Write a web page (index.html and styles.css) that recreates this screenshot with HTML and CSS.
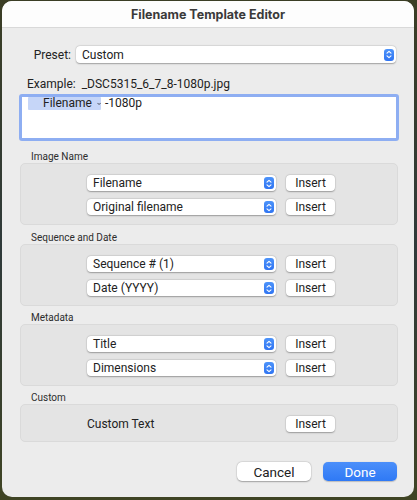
FILE: index.html
```html
<!DOCTYPE html>
<html>
<head>
<meta charset="utf-8">
<link rel="stylesheet" href="styles.css">
</head>
<body>
<div class="window">
  <div class="titlebar">Filename Template Editor</div>
  <div class="content">
    <div class="preset-row">
      <span class="preset-label">Preset:</span>
      <div class="select preset-select">
        <span>Custom</span>
        <span class="stepper"><svg width="6" height="9" viewBox="0 0 6 9"><path d="M1 3.2 L3 1.3 L5 3.2 M1 5.8 L3 7.7 L5 5.8" fill="none" stroke="#fff" stroke-width="1.1" stroke-linecap="round" stroke-linejoin="round"/></svg></span>
      </div>
    </div>
    <div class="example">Example:&nbsp; _DSC5315_6_7_8-1080p.jpg</div>
    <div class="editor">
      <span class="token">Filename <svg class="chev" width="8" height="6" viewBox="0 0 8 6"><path d="M1.5 1.5 L4 4 L6.5 1.5" fill="none" stroke="#1e1e1e" stroke-width="1.4" stroke-linecap="round" stroke-linejoin="round"/></svg></span><span class="suffix">-1080p</span>
    </div>

    <div class="group-label first">Image Name</div>
    <div class="group">
      <div class="row">
        <div class="select"><span>Filename</span><span class="stepper"><svg width="6" height="9" viewBox="0 0 6 9"><path d="M1 3.2 L3 1.3 L5 3.2 M1 5.8 L3 7.7 L5 5.8" fill="none" stroke="#fff" stroke-width="1.1" stroke-linecap="round" stroke-linejoin="round"/></svg></span></div>
        <button class="btn">Insert</button>
      </div>
      <div class="row">
        <div class="select"><span>Original filename</span><span class="stepper"><svg width="6" height="9" viewBox="0 0 6 9"><path d="M1 3.2 L3 1.3 L5 3.2 M1 5.8 L3 7.7 L5 5.8" fill="none" stroke="#fff" stroke-width="1.1" stroke-linecap="round" stroke-linejoin="round"/></svg></span></div>
        <button class="btn">Insert</button>
      </div>
    </div>

    <div class="group-label second">Sequence and Date</div>
    <div class="group">
      <div class="row">
        <div class="select"><span>Sequence # (1)</span><span class="stepper"><svg width="6" height="9" viewBox="0 0 6 9"><path d="M1 3.2 L3 1.3 L5 3.2 M1 5.8 L3 7.7 L5 5.8" fill="none" stroke="#fff" stroke-width="1.1" stroke-linecap="round" stroke-linejoin="round"/></svg></span></div>
        <button class="btn">Insert</button>
      </div>
      <div class="row">
        <div class="select"><span>Date (YYYY)</span><span class="stepper"><svg width="6" height="9" viewBox="0 0 6 9"><path d="M1 3.2 L3 1.3 L5 3.2 M1 5.8 L3 7.7 L5 5.8" fill="none" stroke="#fff" stroke-width="1.1" stroke-linecap="round" stroke-linejoin="round"/></svg></span></div>
        <button class="btn">Insert</button>
      </div>
    </div>

    <div class="group-label">Metadata</div>
    <div class="group">
      <div class="row">
        <div class="select"><span>Title</span><span class="stepper"><svg width="6" height="9" viewBox="0 0 6 9"><path d="M1 3.2 L3 1.3 L5 3.2 M1 5.8 L3 7.7 L5 5.8" fill="none" stroke="#fff" stroke-width="1.1" stroke-linecap="round" stroke-linejoin="round"/></svg></span></div>
        <button class="btn">Insert</button>
      </div>
      <div class="row">
        <div class="select"><span>Dimensions</span><span class="stepper"><svg width="6" height="9" viewBox="0 0 6 9"><path d="M1 3.2 L3 1.3 L5 3.2 M1 5.8 L3 7.7 L5 5.8" fill="none" stroke="#fff" stroke-width="1.1" stroke-linecap="round" stroke-linejoin="round"/></svg></span></div>
        <button class="btn">Insert</button>
      </div>
    </div>

    <div class="group-label">Custom</div>
    <div class="group group-custom">
      <div class="row">
        <div class="custom-text">Custom Text</div>
        <button class="btn">Insert</button>
      </div>
    </div>

    <div class="footer">
      <button class="fbtn cancel">Cancel</button>
      <button class="fbtn done">Done</button>
    </div>
  </div>
</div>
</body>
</html>
```

FILE: styles.css
```css
* { box-sizing: border-box; }
html, body { margin: 0; padding: 0; }
body {
  width: 417px;
  height: 500px;
  overflow: hidden;
  background: linear-gradient(180deg, #3b3e25 0%, #2f3a3a 50%, #3f4424 100%);
  font-family: Roboto, "Noto Sans", sans-serif;
  color: #222;
}
.window {
  margin-left: 2px;
  margin-top: 1px;
  width: 412px;
  height: 496px;
  border-radius: 10px;
  background: #ececec;
  overflow: hidden;
  display: flex;
  flex-direction: column;
}
.titlebar {
  height: 27px;
  background: #fdfdfd;
  border-bottom: 1px solid #d9d9d9;
  text-align: center;
  font-family: Inter, "Noto Sans", sans-serif;
  font-weight: 700;
  font-size: 12.5px;
  line-height: 27px;
  color: #3a3a3a;
  flex: none;
}
.content {
  padding: 18px 15px 0 17px;
  display: flex;
  flex-direction: column;
}
.preset-row {
  display: flex;
  align-items: center;
  height: 17px;
}
.preset-label {
  width: 57px;
  text-align: right;
  padding-right: 5px;
  font-size: 12px;
}
.select {
  height: 16px;
  background: #fff;
  border-radius: 4px;
  box-shadow: 0 0.5px 1.5px rgba(0,0,0,0.3), 0 0 0 0.5px rgba(0,0,0,0.06);
  display: flex;
  align-items: center;
  justify-content: space-between;
  padding: 0 2px 0 6px;
  font-size: 12px;
  color: #222;
}
.preset-select {
  width: 320px;
  height: 17px;
  padding-left: 6px;
}
.stepper {
  width: 10px;
  height: 12px;
  border-radius: 3px;
  background: linear-gradient(#4c93fa, #2f74f2);
  display: flex;
  align-items: center;
  justify-content: center;
}
.stepper svg { display: block; }
.example {
  margin-top: 14px;
  margin-left: 8px;
  font-size: 12px;
  height: 14px;
  line-height: 14px;
}
.editor {
  margin-top: 3px;
  width: 380px;
  height: 47px;
  background: #fff;
  border: 3px solid #8eaef2;
  border-radius: 3px;
  padding: 0 6px;
  font-size: 12px;
  display: flex;
  align-items: flex-start;
}
.token {
  display: inline-flex;
  align-items: center;
  background: #c6d6f8;
  width: 73px;
  height: 13px;
  padding-left: 15px;
  border-radius: 1px;
  line-height: 13px;
}
.chev { margin-left: 5px; display: block; }
.suffix {
  margin-left: 4px;
  line-height: 13px;
}
.group-label {
  margin-top: 7px;
  margin-left: 12px;
  font-size: 10px;
  height: 11px;
  line-height: 10px;
  color: #2c2c2c;
}
.group-label.first { margin-top: 11px; }
.group-label.second { margin-top: 8px; }
.group {
  margin-left: 1px;
  width: 378px;
  height: 62px;
  background: #e4e4e4;
  border: 1px solid #dadada;
  border-radius: 5px;
  padding: 11px 0 0 66px;
  display: flex;
  flex-direction: column;
  gap: 8px;
}
.group-custom {
  height: 38px;
  padding-top: 11px;
}
.row {
  display: flex;
  align-items: center;
  gap: 10px;
  height: 16px;
}
.row .select { width: 189px; }
.btn {
  width: 49px;
  height: 16px;
  padding: 0;
  border: none;
  background: #fff;
  border-radius: 4px;
  box-shadow: 0 0.5px 1.5px rgba(0,0,0,0.3), 0 0 0 0.5px rgba(0,0,0,0.06);
  font-family: Roboto, "Noto Sans", sans-serif;
  font-size: 12px;
  color: #222;
}
.custom-text {
  width: 189px;
  font-size: 12px;
}
.footer {
  margin-top: 20px;
  display: flex;
  justify-content: flex-end;
  gap: 12px;
  padding-right: 2px;
}
.fbtn {
  width: 74px;
  height: 19px;
  padding: 0;
  border: none;
  border-radius: 5px;
  font-family: Roboto, "Noto Sans", sans-serif;
  font-size: 13.5px;
}
.cancel {
  background: #fff;
  color: #222;
  box-shadow: 0 0.5px 1.5px rgba(0,0,0,0.3), 0 0 0 0.5px rgba(0,0,0,0.06);
}
.done {
  background: linear-gradient(#4b8ffa, #2f79f5);
  color: #fff;
  box-shadow: 0 0.5px 1px rgba(0,0,0,0.2);
}
```
